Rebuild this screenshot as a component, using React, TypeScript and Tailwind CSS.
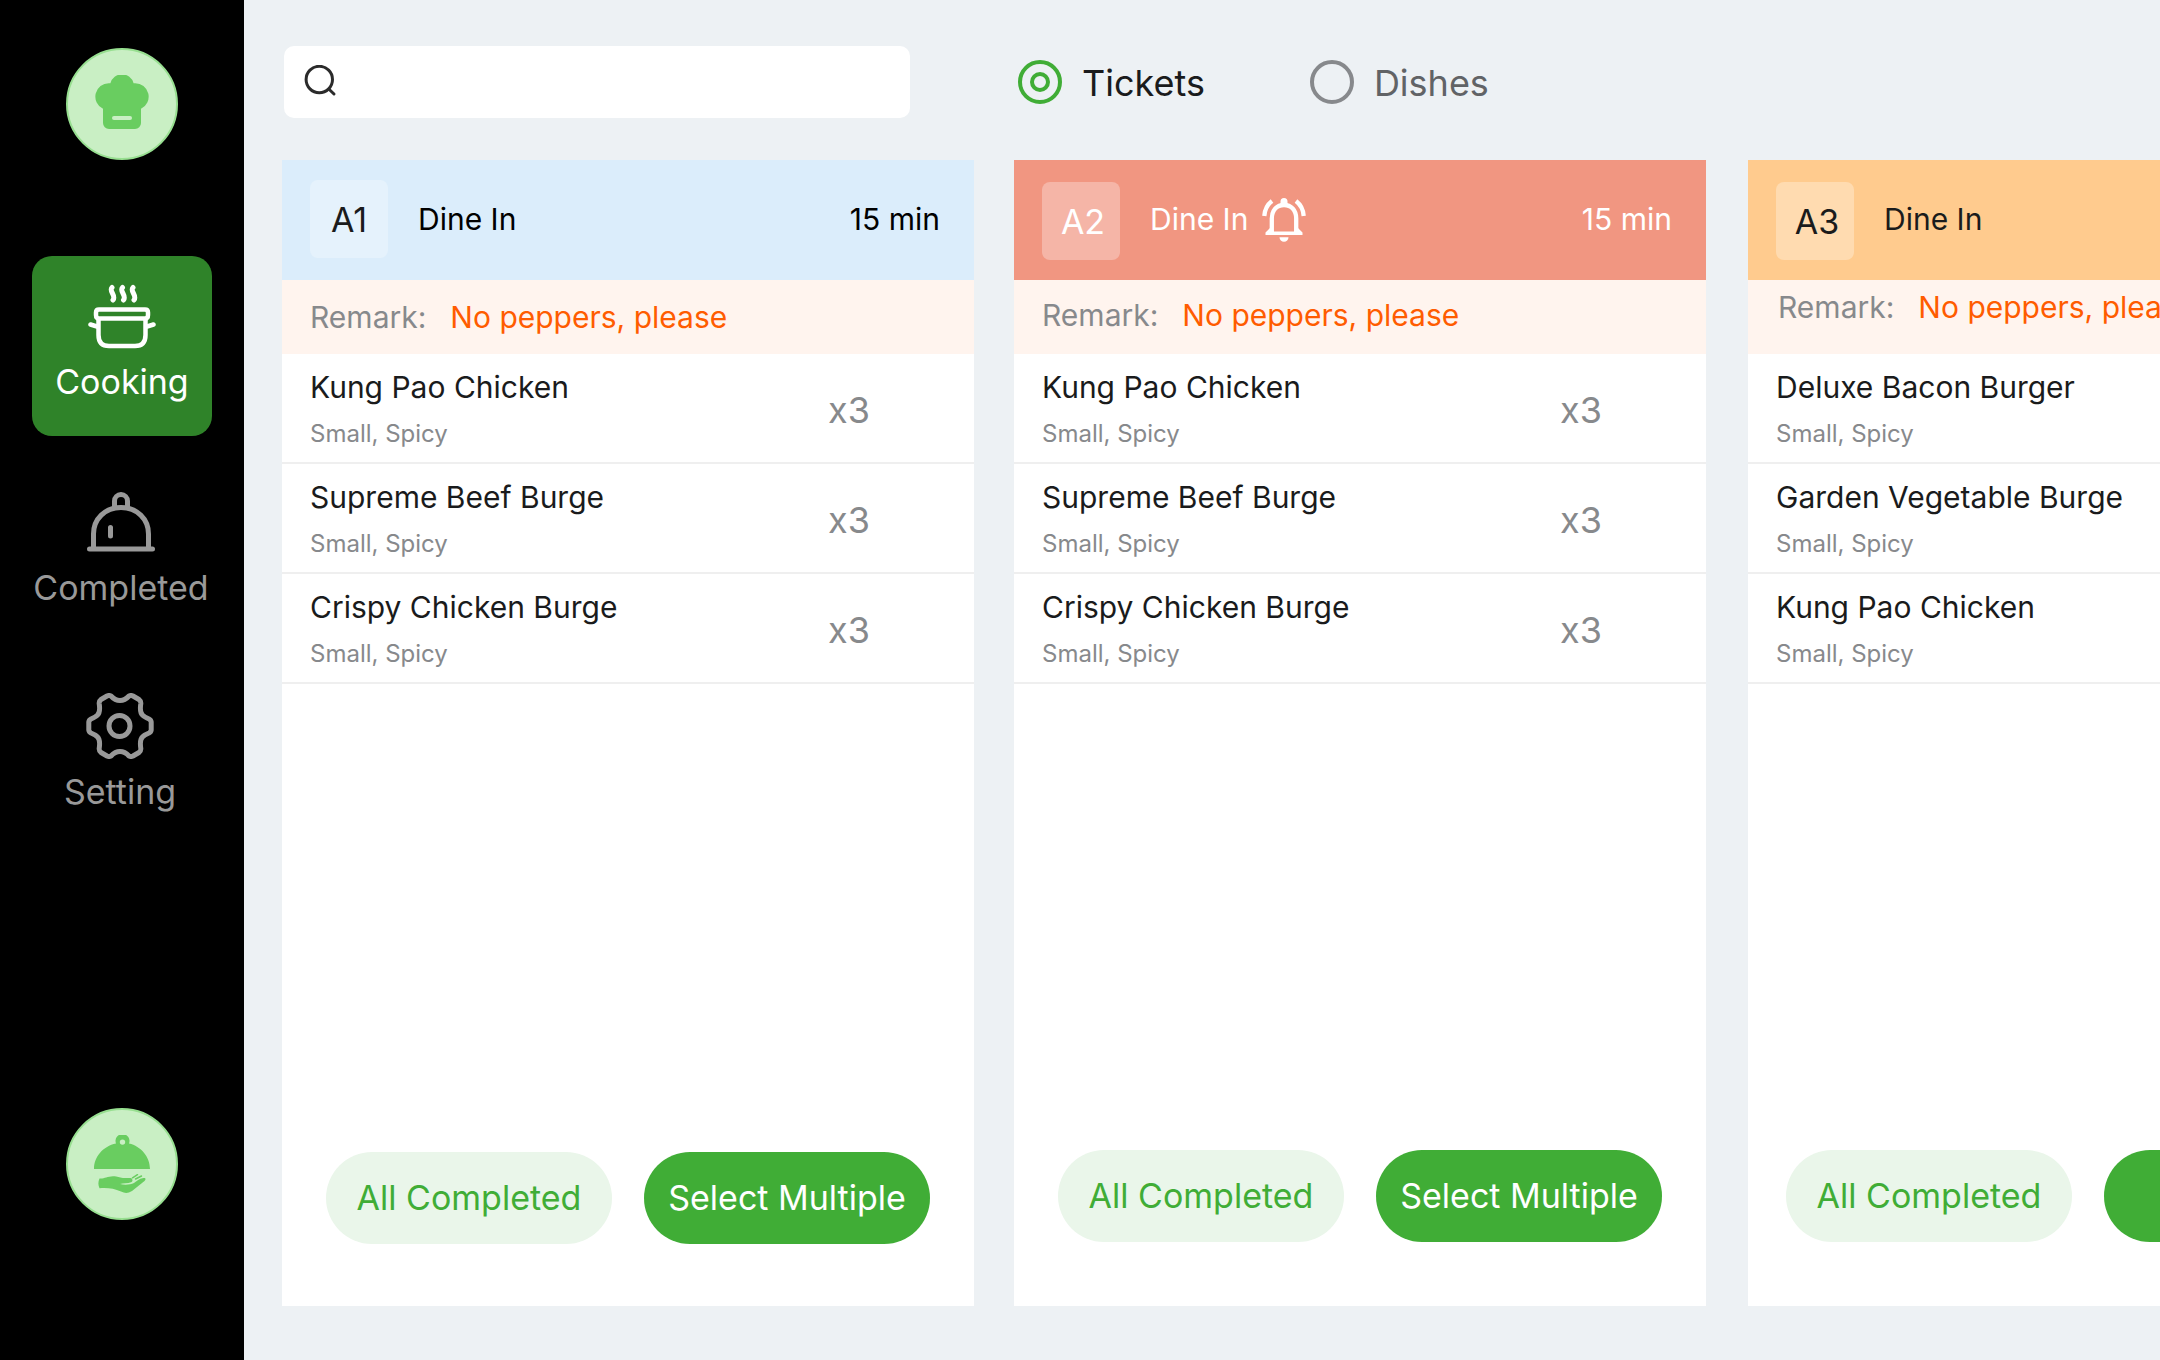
import { useState } from "react";

type Item = { name: string; options: string; qty: string };
type Ticket = {
  table: string;
  time: string;
  alert?: boolean;
  card: string;
  header: string;
  badge: string;
  remark: string;
  actions: string;
  select: string;
  items: Item[];
};

const dish = (name: string): Item => ({ name, options: "Small, Spicy", qty: "x3" });

const tickets: Ticket[] = [
  {
    table: "A1",
    time: "15 min",
    card: "",
    header: "bg-[#dbedfb] text-black",
    badge: "bg-[#e5f2fc] text-[#1a1b1c]",
    remark: "items-center px-7",
    actions: "pl-11 pb-[62px]",
    select: "w-[286px]",
    items: [dish("Kung Pao Chicken"), dish("Supreme Beef Burge"), dish("Crispy Chicken Burge")],
  },
  {
    table: "A2",
    time: "15 min",
    alert: true,
    card: "",
    header: "bg-[#f19681] text-white",
    badge: "mt-1 pl-1 bg-[#f5b5a7] text-white",
    remark: "items-center px-7 pb-1",
    actions: "pl-11 pb-16",
    select: "w-[286px]",
    items: [dish("Kung Pao Chicken"), dish("Supreme Beef Burge"), dish("Crispy Chicken Burge")],
  },
  {
    table: "A3",
    time: "15 min",
    card: "ml-0.5",
    header: "bg-[#ffcb8e] text-[#1a1b1c]",
    badge: "mt-1 pl-1 bg-[#ffdbb0] text-[#1a1b1c]",
    remark: "items-start pt-[7px] px-[30px]",
    actions: "pl-[38px] pb-16",
    select: "w-80 pr-5 text-right",
    items: [dish("Deluxe Bacon Burger"), dish("Garden Vegetable Burge"), dish("Kung Pao Chicken")],
  },
];

function ChefHatIcon() {
  return (
    <svg width="54" height="54" viewBox="0 0 54 54" fill="#69cd60" aria-hidden="true">
      <path d="M15.4 8.2A12 12 0 0 1 38.6 8.2H40A13.4 13.4 0 0 1 46 33.7V48a6 6 0 0 1-6 6H14a6 6 0 0 1-6-6V33.7A13.4 13.4 0 0 1 14 8.2Z" />
      <rect x="17" y="41" width="20" height="4" rx="2" fill="#c9efc4" />
    </svg>
  );
}

function ServingIcon() {
  return (
    <svg width="56" height="58" viewBox="0 0 56 58" fill="#69cd60" aria-hidden="true">
      <path fillRule="evenodd" d="M0 34C0 22 9 11.300 22 8.600A7 7 0 1 1 35 8.600C47 11.300 56 22 56 34ZM28.500 4.400a2.700 2.700 0 1 0 0 5.400 2.700 2.700 0 0 0 0-5.400Z" />
      <path d="M5.500 43.500C10 44 13 41.500 19 41.300C24 41.300 25 42.800 29 43H36.500C39 43.500 39 46.500 37 47.300C34 48.500 29 48.300 26 49C30 50 36 50 40 48C42 46.500 45 43.500 49.500 43C52 42.600 52 44.500 50.500 46L38 56C34 58.500 31 58.500 27 56.500C20 53.500 14 52.600 5.500 53.200C4 50 4 47 5.500 43.500Z" />
      <path d="M38.500 42.800L43.500 39.700M41.500 44L47.500 41" stroke="#69cd60" strokeWidth="1.500" strokeLinecap="round" />
    </svg>
  );
}

function PotIcon() {
  return (
    <svg width="68" height="66" viewBox="0 0 68 66" fill="none" stroke="currentColor" strokeWidth="4.500" strokeLinecap="round" strokeLinejoin="round" aria-hidden="true">
      <path d="M24 3.500C20.500 7 28.500 11.500 25 16M34.500 3.500C31 7 39 11.500 35.500 16M45 3.500C41.500 7 49.500 11.500 46 16" strokeWidth="5" />
      <path d="M11 25.500H57Q60 25.500 60 28.500V31Q60 34.500 57 34.500H11Q8 34.500 8 31V28.500Q8 25.500 11 25.500Z" />
      <path d="M10.500 35V51Q10.500 62 21 62H47Q57.500 62 57.500 51V35" />
      <path d="M2.500 40.500L9 42.500M65.500 40.500L59 42.500" />
    </svg>
  );
}

function ClocheIcon() {
  return (
    <svg width="68" height="61" viewBox="0 0 68 61" fill="none" stroke="currentColor" strokeWidth="5" strokeLinecap="round" aria-hidden="true">
      <path d="M2.500 57H65.500M23.500 35.500V44" />
      <path d="M6.500 56V42C6.500 27 18 15.500 34 15.500S61.500 27 61.500 42V56" />
      <path d="M27.500 15V9A6.500 6.500 0 0 1 40.500 9V15" />
    </svg>
  );
}

function GearIcon() {
  return (
    <svg width="68" height="66" viewBox="0 0 68 66" fill="none" stroke="currentColor" strokeWidth="5" strokeLinejoin="round" aria-hidden="true">
      <path d="M25 3Q23 2 21 3L15 6.500Q13 8 13.200 10.500Q14.500 19.500 11.500 22Q10 23.800 5 26Q3 27 2.800 29V37Q3 39 5 40Q10 42 11.500 44Q14.500 46.500 13.200 55.500Q13 58 15 59.500L21 63Q23 64 25 63Q29 58.500 34 58.500T43 63Q45 64 47 63L53 59.500Q55 58 54.800 55.500Q53.500 46.500 56.500 44Q58 42 63 40Q65 39 65.200 37V29Q65 27 63 26Q58 23.800 56.500 22Q53.500 19.500 54.800 10.500Q55 8 53 6.500L47 3Q45 2 43 3Q39 7.500 34 7.500T25 3Z" />
      <circle cx="33.500" cy="33" r="10.500" />
    </svg>
  );
}

function BellIcon() {
  return (
    <svg width="44" height="44" viewBox="0 0 44 44" fill="none" stroke="currentColor" strokeWidth="4.300" aria-hidden="true">
      <path d="M9.800 35V20.500C9.800 12 15 7 22 7S34.200 12 34.200 20.500V35" />
      <path d="M2.300 18C2.700 11.500 5.500 6.500 10 3M41.700 18C41.300 11.500 38.500 6.500 34 3" />
      <path d="M22 0A3.500 3.500 0 0 1 25.500 3.500V7H18.500V3.500A3.500 3.500 0 0 1 22 0ZM17.500 39.200H26.500A4.500 4.500 0 0 1 17.500 39.200ZM8 30L12 33.500H32L36 30L40.500 34.500V37H3.500V34.500Z" fill="currentColor" stroke="none" />
    </svg>
  );
}

const nav = [
  { name: "Cooking", icon: <PotIcon />, style: "gap-[11px] pt-7 bg-[#2f8329] text-white" },
  { name: "Completed", icon: <ClocheIcon />, style: "gap-3.5 pt-8 pr-0.5 text-[#999999]" },
  { name: "Setting", icon: <GearIcon />, style: "gap-3 pt-[29px] pr-1 text-[#999999]" },
];

function Sidebar() {
  return (
    <aside className="flex w-[244px] shrink-0 flex-col items-center bg-black pt-12 pb-[140px]">
      <div className="flex size-28 items-center justify-center rounded-full border-2 border-[#97df90] bg-[#c9efc4] pb-1">
        <ChefHatIcon />
      </div>
      <nav className="mt-24 flex flex-col items-center gap-6">
        {nav.map((n) => (
          <a key={n.name} href={"#" + n.name.toLowerCase()} className={"flex size-[180px] flex-col items-center rounded-[20px] text-[34px] leading-[42px] " + n.style}>
            {n.icon}
            {n.name}
          </a>
        ))}
      </nav>
      <button type="button" aria-label="Serve" className="mt-auto flex size-28 items-center justify-center rounded-full border-2 border-[#97df90] bg-[#c9efc4]">
        <ServingIcon />
      </button>
    </aside>
  );
}

function TicketCard({ ticket }: { ticket: Ticket }) {
  return (
    <article className={"flex w-[692px] shrink-0 flex-col bg-white " + ticket.card}>
      <header className={"flex h-30 items-center pr-[34px] pb-0.5 pl-7 text-[30px] " + ticket.header}>
        <span className={"flex size-[78px] items-center justify-center rounded-lg text-[34px] " + ticket.badge}>{ticket.table}</span>
        <h2 className="ml-[30px]">Dine In</h2>
        {ticket.alert && (
          <span className="mt-0.5 ml-3.5">
            <BellIcon />
          </span>
        )}
        <time className="ml-auto">{ticket.time}</time>
      </header>
      <p className={"flex h-[74px] gap-6 bg-[#fff4ee] text-[30px] leading-10 " + ticket.remark}>
        <span className="text-[#87898c]">Remark:</span>
        <span className="text-[#ff5c00]">No peppers, please</span>
      </p>
      <ul>
        {ticket.items.map((item) => (
          <li key={item.name} className="flex h-[110px] items-center justify-between border-b-2 border-[#efefef] pr-[104px] pl-7">
            <div className="self-start pt-3">
              <h3 className="text-[30px] leading-[42px] text-[#1a1b1c]">{item.name}</h3>
              <p className="mt-1.5 text-2xl leading-10 text-[#87898c]">{item.options}</p>
            </div>
            <span className="pt-1 text-4xl text-[#87898c]">{item.qty}</span>
          </li>
        ))}
      </ul>
      <footer className={"mt-auto flex gap-8 text-[34px] " + ticket.actions}>
        <button type="button" className="h-[92px] w-[286px] rounded-full bg-[#eaf6ea] pb-0.5 text-[#40ad36]">All Completed</button>
        <button type="button" className={"h-[92px] rounded-full bg-[#40ad36] pb-0.5 text-white " + ticket.select}>Select Multiple</button>
      </footer>
    </article>
  );
}

function ViewOption({ name, checked, onSelect }: { name: string; checked: boolean; onSelect: () => void }) {
  return (
    <label className="flex items-center gap-5 text-4xl text-[#616366] has-checked:text-[#1a1b1c]">
      <input
        type="radio"
        name="view"
        checked={checked}
        onChange={onSelect}
        className="grid size-11 appearance-none place-items-center rounded-full border-4 border-[#87898c] checked:border-[#40ad36] checked:before:size-5 checked:before:rounded-full checked:before:border-4 checked:before:border-[#40ad36] checked:before:content-['']"
      />
      <span className="pt-0.5">{name}</span>
    </label>
  );
}

export default function App() {
  const [view, setView] = useState("Tickets");
  return (
    <div className="flex min-h-screen overflow-hidden bg-[#edf1f4] font-['Inter',sans-serif]">
      <Sidebar />
      <main className="flex min-w-0 flex-1 flex-col overflow-hidden pt-[46px] pb-[54px] pl-[38px]">
        <div className="flex items-center">
          <label className="ml-0.5 flex h-[72px] w-[626px] items-center gap-4 rounded-[10px] bg-white px-5">
            <svg width="34" height="34" viewBox="0 0 34 34" fill="none" stroke="#2b2b2b" strokeWidth="3" strokeLinecap="round" aria-hidden="true">
              <circle cx="15.300" cy="14.500" r="13.200" />
              <path d="M25.300 24.500L30 29" />
            </svg>
            <input type="search" aria-label="Search" className="h-full min-w-0 flex-1 text-3xl outline-none" />
          </label>
          <div className="ml-[108px] flex gap-[105px]" role="radiogroup" aria-label="View">
            {["Tickets", "Dishes"].map((v) => (
              <ViewOption key={v} name={v} checked={view === v} onSelect={() => setView(v)} />
            ))}
          </div>
        </div>
        <section className="mt-[42px] flex flex-1 gap-10">
          {tickets.map((t) => (
            <TicketCard key={t.table} ticket={t} />
          ))}
        </section>
      </main>
    </div>
  );
}
